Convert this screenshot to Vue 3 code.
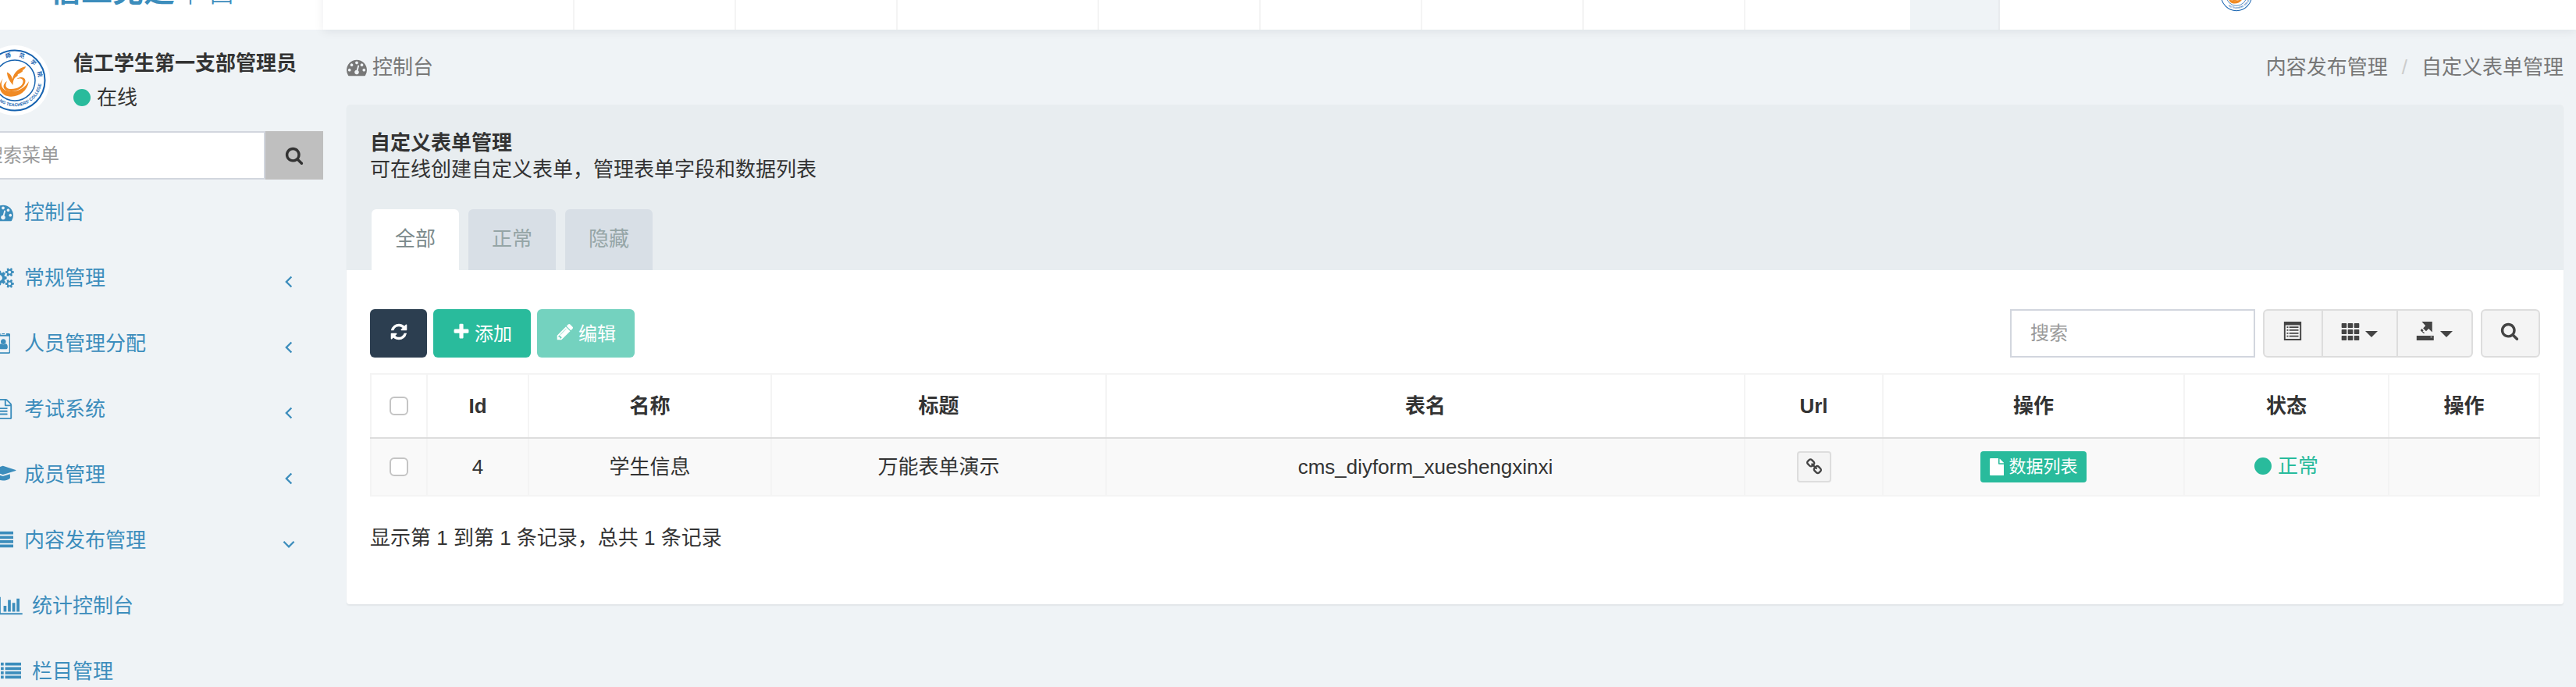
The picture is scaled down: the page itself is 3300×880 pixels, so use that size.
<script setup>
import { h, ref } from 'vue';

// 图标路径，viewBox 高度统一 1792，宽度按字形
const glyphs = {
  dashboard: [1792, 'M384 1152q0-53-37.5-90.5t-90.5-37.5-90.5 37.5-37.5 90.5 37.5 90.5 90.5 37.5 90.5-37.5 37.5-90.5zm192-448q0-53-37.5-90.5t-90.5-37.5-90.5 37.5-37.5 90.5 37.5 90.5 90.5 37.5 90.5-37.5 37.5-90.5zm428 481l101-382q6-26-7.5-48.5t-38.5-29.5-48 6.5-30 39.5l-101 382q-60 5-107 43.5t-63 98.5q-20 77 20 146t117 89 146-20 89-117q16-60-6-117t-72-91zm660-33q0-53-37.5-90.5t-90.5-37.5-90.5 37.5-37.5 90.5 37.5 90.5 90.5 37.5 90.5-37.5 37.5-90.5zm-640-640q0-53-37.5-90.5t-90.5-37.5-90.5 37.5-37.5 90.5 37.5 90.5 90.5 37.5 90.5-37.5 37.5-90.5zm448 192q0-53-37.5-90.5t-90.5-37.5-90.5 37.5-37.5 90.5 37.5 90.5 90.5 37.5 90.5-37.5 37.5-90.5zm320 448q0 261-141 483-19 29-54 29h-1402q-35 0-54-29-141-221-141-483 0-182 71-348t191-286 286-191 348-71 348 71 286 191 191 286 71 348z'],
  cogs: [1920, 'M896 896q0-106-75-181t-181-75-181 75-75 181 75 181 181 75 181-75 75-181zm768 512q0-52-38-90t-90-38-90 38-38 90q0 53 37.5 90.5t90.5 37.5 90.5-37.5 37.5-90.5zm0-1024q0-52-38-90t-90-38-90 38-38 90q0 53 37.5 90.5t90.5 37.5 90.5-37.5 37.5-90.5zm-384 421v185q0 10-7 19.5t-16 10.5l-155 24q-11 35-32 76 34 48 90 115 7 11 7 20 0 12-7 19-23 30-82.5 89.5t-78.5 59.5q-11 0-21-7l-115-90q-37 19-77 31-11 108-23 155-7 24-30 24h-186q-11 0-20-7.5t-10-17.5l-23-153q-34-10-75-31l-118 89q-7 7-20 7-11 0-21-8-144-133-144-160 0-9 7-19 10-14 41-53t47-61q-23-44-35-82l-152-24q-10-1-17-9.5t-7-19.5v-185q0-10 7-19.5t16-10.5l155-24q11-35 32-76-34-48-90-115-7-11-7-20 0-12 7-20 22-30 82-89t79-59q11 0 21 7l115 90q34-18 77-32 11-108 23-154 7-24 30-24h186q11 0 20 7.5t10 17.5l23 153q34 10 75 31l118-89q8-7 20-7 11 0 21 8 144 133 144 160 0 8-7 19-12 16-42 54t-45 60q23 48 34 82l152 23q10 2 17 10.5t7 19.5zm640 533v140q0 16-149 31-12 27-30 52 51 113 51 138 0 4-4 7-122 71-124 71-8 0-46-47t-52-68q-20 2-30 2t-30-2q-14 21-52 68t-46 47q-2 0-124-71-4-3-4-7 0-25 51-138-18-25-30-52-149-15-149-31v-140q0-16 149-31 13-29 30-52-51-113-51-138 0-4 4-7 4-2 35-20t59-34 30-16q8 0 46 46.5t52 67.5q20-2 30-2t30 2q51-71 92-112l6-2q4 0 124 70 4 3 4 7 0 25-51 138 17 23 30 52 149 15 149 31zm0-1024v140q0 16-149 31-12 27-30 52 51 113 51 138 0 4-4 7-122 71-124 71-8 0-46-47t-52-68q-20 2-30 2t-30-2q-14 21-52 68t-46 47q-2 0-124-71-4-3-4-7 0-25 51-138-18-25-30-52-149-15-149-31v-140q0-16 149-31 13-29 30-52-51-113-51-138 0-4 4-7 4-2 35-20t59-34 30-16q8 0 46 46.5t52 67.5q20-2 30-2t30 2q51-71 92-112l6-2q4 0 124 70 4 3 4 7 0 25-51 138 17 23 30 52 149 15 149 31z'],
  badge: [1280, 'M1024 1228q0 80-49 126t-118 46h-434q-69 0-118-46t-49-126q0-128 49-222t151-94q80 76 184 76t184-76q102 0 151 94t49 222zM870 736q0 95-67 162t-163 67-163-67-67-162 67-162 163-67 163 67 67 162zM1152 1632v-1376h-1024v1376q0 32 32 32h960q32 0 32-32zM1280 160v1472q0 66-47 113t-113 47h-960q-66 0-113-47t-47-113v-1472q0-66 47-113t113-47h224v96q0 32 32 32h448q32 0 32-32v-96h224q66 0 113 47t47 113zM512 0h256v64h-256z'],
  fileText: [1792, 'M1596 380q28 28 48 76t20 88v1152q0 40-28 68t-68 28h-1344q-40 0-68-28t-28-68v-1600q0-40 28-68t68-28h896q40 0 88 20t76 48zm-444-244v376h376q-10-29-22-41l-313-313q-12-12-41-22zm384 1528v-1024h-416q-40 0-68-28t-28-68v-416h-768v1536h1280zm-1024-864q0-14 9-23t23-9h704q14 0 23 9t9 23v64q0 14-9 23t-23 9h-704q-14 0-23-9t-9-23v-64zm736 224q14 0 23 9t9 23v64q0 14-9 23t-23 9h-704q-14 0-23-9t-9-23v-64q0-14 9-23t23-9h704zm0 256q14 0 23 9t9 23v64q0 14-9 23t-23 9h-704q-14 0-23-9t-9-23v-64q0-14 9-23t23-9h704z'],
  cap: [2304, 'M1774 836l18 316q4 69-82 128t-235 93.5-323 34.5-323-34.5-235-93.5-82-128l18-316 574 181q22 7 48 7t48-7zm530-324q0 23-22 31l-1120 352q-4 1-10 1t-10-1l-652-206q-43 34-71 111.5t-34 178.5q63 36 63 109 0 69-58 107l58 433q2 14-8 25-9 11-24 11h-192q-15 0-24-11-10-11-8-25l58-433q-58-38-58-107 0-73 65-111 11-207 98-330l-333-104q-22-8-22-31t22-31l1120-352q4-1 10-1t10 1l1120 352q22 8 22 31z'],
  list: [1792, 'M0 1280h256v256h-256zM0 896h256v256h-256zM0 512h256v256h-256zM0 128h256v256h-256zM384 1280h1408v256h-1408zM384 896h1408v256h-1408zM384 512h1408v256h-1408zM384 128h1408v256h-1408z'],
  chart: [2048, 'M640 896v512h-256v-512h256zm384-512v1024h-256v-1024h256zm1024 1152v128h-2048v-1536h128v1408h1920zm-640-896v768h-256v-768h256zm384-384v1152h-256v-1152h256z'],
  search: [1792, 'M1216 832q0-185-131.5-316.5t-316.5-131.5-316.5 131.5-131.5 316.5 131.5 316.5 316.5 131.5 316.5-131.5 131.5-316.5zm512 832q0 52-38 90t-90 38q-54 0-90-38l-343-342q-179 124-399 124-143 0-273.5-55.5t-225-150-150-225-55.5-273.5 55.5-273.5 150-225 225-150 273.5-55.5 273.5 55.5 225 150 150 225 55.5 273.5q0 220-124 399l343 343q37 37 37 90z'],
  refresh: [1792, 'M1639 1056q0 5-1 7-64 268-268 434.5t-478 166.5q-146 0-282.5-55t-243.5-157l-129 129q-19 19-45 19t-45-19-19-45v-448q0-26 19-45t45-19h448q26 0 45 19t19 45-19 45l-137 137q71 66 161 102t187 36q134 0 250-65t186-179q11-17 53-117 8-23 30-23h192q13 0 22.5 9.5t9.5 22.5zm25-800v448q0 26-19 45t-45 19h-448q-26 0-45-19t-19-45 19-45l138-138q-148-137-349-137-134 0-250 65t-186 179q-11 17-53 117-8 23-30 23h-199q-13 0-22.5-9.5t-9.5-22.5v-7q65-268 270-434.5t480-166.5q146 0 284 55.5t245 156.5l130-129q19-19 45-19t45 19 19 45z'],
  plus: [1792, 'M1600 736v192q0 40-28 68t-68 28h-416v416q0 40-28 68t-68 28h-192q-40 0-68-28t-28-68v-416h-416q-40 0-68-28t-28-68v-192q0-40 28-68t68-28h416v-416q0-40 28-68t68-28h192q40 0 68 28t28 68v416h416q40 0 68 28t28 68z'],
  pencil: [1792, 'M491 1536l91-91-235-235-91 91v107h128v128h107zm523-928q0-22-22-22-10 0-17 7l-542 542q-7 7-7 17 0 22 22 22 10 0 17-7l542-542q7-7 7-17zm-54-192l416 416-832 832h-416v-416zm683 96q0 53-37 90l-166 166-416-416 166-165q36-38 90-38 53 0 91 38l235 234q37 39 37 91z'],
  link: [1792, 'M1520 1216q0-40-28-68l-208-208q-28-28-68-28-42 0-72 32 3 3 19 18.5t21.5 21.5 15 19 13 25.5 3.5 27.5q0 40-28 68t-68 28q-15 0-27.5-3.5t-25.5-13-19-15-21.5-21.5-18.5-19q-33 31-33 73 0 40 28 68l206 207q27 27 68 27 40 0 68-26l147-146q28-28 28-67zm-703-705q0-40-28-68l-206-207q-28-28-68-28-39 0-68 27l-147 146q-28 28-28 67 0 40 28 68l208 208q27 27 68 27 42 0 72-31-3-3-19-18.5t-21.5-21.5-15-19-13-25.5-3.5-27.5q0-40 28-68t68-28q15 0 27.5 3.5t25.5 13 19 15 21.5 21.5 18.5 19q33-31 33-73zm895 705q0 120-85 203l-147 146q-83 83-203 83-121 0-204-85l-206-207q-83-83-83-203 0-123 88-209l-88-88q-86 88-208 88-120 0-204-84l-208-208q-84-84-84-204t85-203l147-146q83-83 203-83 121 0 204 85l206 207q83 83 83 203 0 123-88 209l88 88q86-88 208-88 120 0 204 84l208 208q84 84 84 204z'],
  file: [1536, 'M1024 512v-472q22 14 36 28l408 408q14 14 28 36h-472zm-128 32q0 40 28 68t68 28h544v1056q0 40-28 68t-68 28h-1344q-40 0-68-28t-28-68v-1600q0-40 28-68t68-28h800v544z'],
  left: [1024, 'M800 500L404 896l396 396-112 112-508-508 508-508z'],
  down: [1152, 'M180 620l396 396 396-396 112 112-508 508-508-508z'],
  listAlt: [1792, 'M64 0h1664v1792h-1664zM208 336v1312h1376v-1312zM336 464h144v128h-144zM576 464h880v128h-880zM336 752h144v128h-144zM576 752h880v128h-880zM336 1040h144v128h-144zM576 1040h880v128h-880zM336 1328h144v128h-144zM576 1328h880v128h-880z'],
  th: [1792, 'M110 150h370q60 0 60 60v330q0 60-60 60h-370q-60 0-60-60v-330q0-60 60-60zM710 150h370q60 0 60 60v330q0 60-60 60h-370q-60 0-60-60v-330q0-60 60-60zM1310 150h370q60 0 60 60v330q0 60-60 60h-370q-60 0-60-60v-330q0-60 60-60zM110 750h370q60 0 60 60v330q0 60-60 60h-370q-60 0-60-60v-330q0-60 60-60zM710 750h370q60 0 60 60v330q0 60-60 60h-370q-60 0-60-60v-330q0-60 60-60zM1310 750h370q60 0 60 60v330q0 60-60 60h-370q-60 0-60-60v-330q0-60 60-60zM110 1342h370q60 0 60 60v330q0 60-60 60h-370q-60 0-60-60v-330q0-60 60-60zM710 1342h370q60 0 60 60v330q0 60-60 60h-370q-60 0-60-60v-330q0-60 60-60zM1310 1342h370q60 0 60 60v330q0 60-60 60h-370q-60 0-60-60v-330q0-60 60-60z'],
  exportFile: [1792, 'M560 0h990v1010l-340-330-240 240-290-290 230-230zM560 680l160 160-90 90 200 130-80 80-290-260q-50-50 0-100zM60 1350h1640v442h-1640zM1390 1440v80h150v-80z'],
};

const Icon = (props) =>
  h(
    'svg',
    {
      viewBox: `0 0 ${glyphs[props.name][0]} 1792`,
      fill: 'currentColor',
      'fill-rule': 'evenodd',
      'aria-hidden': 'true',
    },
    [h('path', { d: glyphs[props.name][1] })],
  );
Icon.props = ['name'];

// 左侧菜单
const menus = [
  { icon: 'dashboard', text: '控制台' },
  { icon: 'cogs', text: '常规管理', arrow: 'left' },
  { icon: 'badge', text: '人员管理分配', arrow: 'left' },
  { icon: 'fileText', text: '考试系统', arrow: 'left' },
  { icon: 'cap', text: '成员管理', arrow: 'left' },
  { icon: 'list', text: '内容发布管理', arrow: 'down' },
  { icon: 'chart', text: '统计控制台', sub: true },
  { icon: 'list', text: '栏目管理', sub: true },
];

// 顶部标签页宽度类型
const navTabs = ['first', 'short', 'short', 'long', 'short', 'short', 'short', 'short', 'last', 'active'];

// 状态筛选
const tabs = ['全部', '正常', '隐藏'];
const activeTab = ref('全部');

const columns = [
  { key: 'id', title: 'Id' },
  { key: 'name', title: '名称' },
  { key: 'title', title: '标题' },
  { key: 'table', title: '表名' },
  { key: 'url', title: 'Url' },
  { key: 'data', title: '操作' },
  { key: 'status', title: '状态' },
  { key: 'operate', title: '操作' },
];

const rows = [
  { id: 4, name: '学生信息', title: '万能表单演示', table: 'cms_diyform_xueshengxinxi', status: '正常' },
];
</script>

<template>
  <div class="app">
    <!-- 校徽 -->
    <svg class="defs" aria-hidden="true">
      <symbol id="emblem" viewBox="0 0 180 180">
        <circle cx="90" cy="90" r="90" fill="#fff" />
        <circle cx="90" cy="90" r="77" fill="none" stroke="#1763b0" stroke-width="4" />
        <circle cx="90" cy="90" r="52" fill="none" stroke="#1763b0" stroke-width="3" />
        <g class="emblem-cn">
          <text x="90" y="29" transform="rotate(-46 90 90)">阳</text>
          <text x="90" y="29" transform="rotate(-15 90 90)">師</text>
          <text x="90" y="29" transform="rotate(16 90 90)">范</text>
          <text x="90" y="29" transform="rotate(46 90 90)">学</text>
          <text x="90" y="29" transform="rotate(76 90 90)">院</text>
        </g>
        <path id="emblem-arc" d="M21 90A69 69 0 0 0 158 99" fill="none" />
        <text class="emblem-en">
          <textPath href="#emblem-arc" startOffset="100%">NG TEACHERS' COLLEGE</textPath>
        </text>
        <g fill="#f08a24">
          <path d="M85 102C77 92 70 82 70 69c8 3 12 10 14 18 3-18 16-28 34-33-1 5-4 8-9 10 2 0 2 3-2 5-4 3-7 4-10 6 2 1 0 4-4 6-6 4-8 11-8 21z" />
          <path d="M60 85c-8 13-5 27 9 31 21 6 44-2 57-24-4 27-28 42-51 39-23-3-32-28-15-46z" />
          <path d="M70 92c-6 11-3 19 8 20 18 1 32-8 33-18 1-8-6-11-16-8 13-9 26-2 21 11-5 14-26 24-43 20-15-3-16-17-3-25z" />
        </g>
      </symbol>
    </svg>

    <header class="header">
      <a href="#" class="logo"><b>信工党建</b>平台</a>
      <nav class="navbar">
        <a v-for="(type, i) in navTabs" :key="i" href="#" class="nav-tab" :class="`nav-tab--${type}`" aria-label="标签页"></a>
        <a href="#" class="nav-user" aria-label="个人中心"><svg class="nav-avatar"><use href="#emblem" /></svg></a>
      </nav>
    </header>

    <div class="body">
      <aside class="sidebar">
        <div class="user-panel">
          <svg class="avatar"><use href="#emblem" /></svg>
          <div class="user-info">
            <strong>信工学生第一支部管理员</strong>
            <span class="online"><i class="dot"></i>在线</span>
          </div>
        </div>
        <form class="menu-search" @submit.prevent>
          <input type="text" placeholder="搜索菜单" aria-label="搜索菜单" />
          <button type="submit" aria-label="搜索"><Icon name="search" class="icon-24" /></button>
        </form>
        <nav class="menu">
          <a v-for="item in menus" :key="item.text" href="#" class="menu-item" :class="{ 'menu-item--sub': item.sub }">
            <span class="menu-icon"><Icon :name="item.icon" class="icon-26" /></span>
            <span class="menu-text">{{ item.text }}</span>
            <Icon v-if="item.arrow" :name="item.arrow" class="menu-arrow" />
          </a>
        </nav>
      </aside>

      <main class="main">
        <div class="ribbon">
          <a href="#" class="crumb"><Icon name="dashboard" class="icon-26" />控制台</a>
          <div class="crumbs">
            <a href="#" class="crumb">内容发布管理</a>
            <span class="slash">/</span>
            <a href="#" class="crumb">自定义表单管理</a>
          </div>
        </div>

        <section class="panel">
          <div class="panel-heading">
            <div class="panel-lead">
              <strong>自定义表单管理</strong>
              <span>可在线创建自定义表单，管理表单字段和数据列表</span>
            </div>
            <div class="tabs" role="tablist">
              <button
                v-for="tab in tabs"
                :key="tab"
                type="button"
                role="tab"
                class="tab"
                :class="{ 'tab--active': tab === activeTab }"
                @click="activeTab = tab"
              >
                {{ tab }}
              </button>
            </div>
          </div>

          <div class="panel-body">
            <div class="toolbar">
              <button type="button" class="btn btn--dark" aria-label="刷新"><Icon name="refresh" class="icon-24" /></button>
              <button type="button" class="btn btn--green"><Icon name="plus" class="icon-24" />添加</button>
              <button type="button" class="btn btn--green btn--disabled"><Icon name="pencil" class="icon-24" />编辑</button>
              <input type="text" class="search-input" placeholder="搜索" aria-label="搜索" />
              <div class="btn-group">
                <button type="button" class="btn-tool" aria-label="切换"><Icon name="listAlt" class="icon-24" /></button>
                <button type="button" class="btn-tool btn-tool--wide" aria-label="列"><Icon name="th" class="icon-24" /><i class="caret"></i></button>
                <button type="button" class="btn-tool btn-tool--wide" aria-label="导出数据"><Icon name="exportFile" class="icon-24" /><i class="caret"></i></button>
              </div>
              <button type="button" class="btn-tool btn-tool--single" aria-label="普通搜索"><Icon name="search" class="icon-24" /></button>
            </div>

            <table class="table">
              <colgroup>
                <col class="col-check" />
                <col v-for="col in columns" :key="col.key" :class="`col-${col.key}`" />
              </colgroup>
              <thead>
                <tr>
                  <th><input type="checkbox" class="check" aria-label="全选" /></th>
                  <th v-for="col in columns" :key="col.key">{{ col.title }}</th>
                </tr>
              </thead>
              <tbody>
                <tr v-for="row in rows" :key="row.id">
                  <td><input type="checkbox" class="check" :aria-label="row.name" /></td>
                  <td>{{ row.id }}</td>
                  <td>{{ row.name }}</td>
                  <td>{{ row.title }}</td>
                  <td>{{ row.table }}</td>
                  <td>
                    <a href="#" class="btn-xs btn-xs--link" aria-label="链接"><Icon name="link" class="icon-22" /></a>
                  </td>
                  <td>
                    <a href="#" class="btn-xs btn-xs--green"><Icon name="file" class="icon-22" />数据列表</a>
                  </td>
                  <td>
                    <span class="status"><i class="dot"></i>{{ row.status }}</span>
                  </td>
                  <td></td>
                </tr>
              </tbody>
            </table>

            <div class="pagination-info">显示第 1 到第 1 条记录，总共 1 条记录</div>
          </div>
        </section>
      </main>
    </div>
  </div>
</template>

<style>
body {
  background-color: #eff3f6;
}
</style>

<style scoped>
.app {
  height: 100vh;
  overflow: hidden;
  font-family: 'Liberation Sans', 'Noto Sans CJK SC', sans-serif;
  font-size: 26px;
  line-height: 36px;
  color: #333333;
  background-color: #eff3f6;
}

.app * {
  box-sizing: border-box;
}

a {
  color: inherit;
  text-decoration: none;
}

button,
input {
  font-family: inherit;
  margin: 0;
}

button {
  cursor: pointer;
}

.defs {
  position: absolute;
  width: 0;
  height: 0;
}

.emblem-cn {
  font-size: 14px;
  font-weight: 700;
  fill: #1763b0;
  text-anchor: middle;
}

.emblem-en {
  font-size: 11px;
  font-weight: 700;
  fill: #1763b0;
  text-anchor: end;
}

.icon-22 {
  height: 22px;
}

.icon-24 {
  height: 24px;
}

.icon-26 {
  height: 26px;
}

/* 顶栏：向上滚出一部分 */
.header {
  display: flex;
  height: 100px;
  margin-top: -62px;
  margin-left: -46px;
}

.logo {
  flex: none;
  width: 460px;
  line-height: 100px;
  font-size: 40px;
  font-weight: 300;
  text-align: center;
  color: #3c8dbc;
  background-color: #ffffff;
}

.logo b {
  font-weight: 700;
}

.navbar {
  flex: 1;
  display: flex;
  background-color: #ffffff;
  box-shadow: 0 2px 12px rgba(0, 21, 41, 0.08);
}

.nav-tab {
  width: 207px;
  border-right: 2px solid #f4f4f4;
}

.nav-tab--first {
  width: 322px;
}

.nav-tab--long {
  width: 258px;
}

.nav-tab--last {
  width: 211px;
  border-right: none;
}

.nav-tab--active {
  width: 115px;
  border-right-color: #e8ebee;
  background-color: #eff3f6;
}

.nav-user {
  display: flex;
  align-items: center;
  margin-left: auto;
  padding: 12px 412px 0 0;
}

.nav-avatar {
  width: 46px;
  height: 46px;
}

.body {
  display: flex;
}

/* 侧边栏 */
.sidebar {
  flex: none;
  width: 460px;
  margin-left: -46px;
}

.user-panel {
  display: flex;
  gap: 30px;
  padding: 20px;
}

.avatar {
  flex: none;
  width: 90px;
  height: 90px;
}

.user-info {
  display: flex;
  flex-direction: column;
  gap: 8px;
  padding-top: 5px;
}

.dot {
  width: 22px;
  height: 22px;
  border-radius: 50%;
  background-color: #29bb9c;
}

.online,
.status {
  display: inline-flex;
  align-items: center;
  gap: 8px;
}

.status {
  color: #29bb9c;
}

.menu-search {
  display: flex;
  height: 62px;
}

.menu-search input {
  flex: 1;
  min-width: 0;
  padding: 0 24px;
  font-size: 24px;
  border: 2px solid #d2d6de;
  background-color: #ffffff;
}

.menu-search button {
  display: flex;
  align-items: center;
  justify-content: center;
  width: 74px;
  padding: 0;
  border: none;
  color: #333333;
  background-color: #bfbfbf;
}

input::placeholder {
  color: #999999;
  opacity: 1;
}

.menu-item {
  display: flex;
  align-items: center;
  height: 84px;
  padding: 0 30px;
  color: #3c8dbc;
}

.menu-item--sub {
  padding-left: 40px;
}

.menu-icon {
  display: flex;
  justify-content: center;
  width: 40px;
  margin-right: 7px;
}

.menu-arrow {
  width: 24px;
  height: 26px;
  margin: 10px 2px 0 auto;
}

/* 主区 */
.main {
  flex: 1;
  min-width: 0;
  padding: 0 16px 0 30px;
}

.ribbon {
  display: flex;
  justify-content: space-between;
  align-items: center;
  height: 96px;
  color: #777777;
}

.crumb {
  display: inline-flex;
  align-items: center;
  gap: 7px;
}

.slash {
  padding: 0 18px;
  color: #cccccc;
}

.panel {
  border-radius: 4px;
  background-color: #ffffff;
  box-shadow: 0 2px 2px rgba(0, 0, 0, 0.06);
}

.panel-heading {
  padding: 32px 30px 0;
  border-radius: 4px 4px 0 0;
  background-color: #e8edf0;
}

.panel-lead {
  display: flex;
  flex-direction: column;
  line-height: 34px;
  margin-bottom: 34px;
}

.tabs {
  display: flex;
  gap: 12px;
  padding-left: 2px;
}

.tab {
  width: 112px;
  height: 78px;
  padding: 0 0 8px;
  border: none;
  border-radius: 6px 6px 0 0;
  font-size: 26px;
  color: #95a5a6;
  background-color: #d8dfe6;
}

.tab--active {
  color: #7b8a8b;
  background-color: #ffffff;
}

.panel-body {
  padding: 50px 30px 67px;
}

.toolbar {
  display: flex;
  gap: 8px;
  margin-bottom: 20px;
}

.btn {
  display: flex;
  align-items: center;
  justify-content: center;
  gap: 5px;
  height: 62px;
  padding: 0 24px 4px;
  border: none;
  border-radius: 6px;
  font-size: 24px;
  color: #ffffff;
}

.btn--dark {
  width: 73px;
  background-color: #2c3e50;
}

.btn--green {
  background-color: #29bb9c;
}

.btn--disabled {
  background-color: #74d2bf;
}

.search-input {
  width: 314px;
  height: 62px;
  margin-left: auto;
  padding: 0 24px;
  border: 2px solid #d2d6de;
  font-size: 24px;
}

.btn-group {
  display: flex;
  margin: 0 2px;
}

.btn-tool {
  display: flex;
  align-items: center;
  justify-content: center;
  gap: 7px;
  width: 77px;
  height: 62px;
  padding: 0 2px 6px 0;
  border: 2px solid #dddddd;
  color: #444444;
  background-color: #f4f4f4;
}

.btn-group .btn-tool:first-child {
  border-radius: 6px 0 0 6px;
}

.btn-group .btn-tool:last-child {
  border-radius: 0 6px 6px 0;
}

.btn-tool--wide {
  width: 98px;
  margin-left: -2px;
}

.btn-tool--single {
  width: 76px;
  border-radius: 6px;
}

.caret {
  margin-top: 8px;
  border-top: 8px solid #444444;
  border-left: 8px solid transparent;
  border-right: 8px solid transparent;
}

/* 表格 */
.table {
  width: 100%;
  table-layout: fixed;
  border-collapse: collapse;
  text-align: center;
}

.col-check { width: 72px; }
.col-id { width: 130px; }
.col-name { width: 311px; }
.col-title { width: 429px; }
.col-table { width: 818px; }
.col-url { width: 177px; }
.col-data { width: 386px; }
.col-status { width: 262px; }
.col-operate { width: 193px; }

.table th,
.table td {
  padding: 0;
  border: 2px solid #f4f4f4;
  vertical-align: middle;
}

.table th {
  height: 82px;
  font-weight: 700;
  border-bottom-color: #dddddd;
}

.table td {
  height: 74px;
  border-top-color: #dddddd;
  background-color: #f9f9f9;
}

.check {
  display: block;
  appearance: none;
  width: 24px;
  height: 24px;
  margin: 0 auto;
  border: 2px solid #c4c4c4;
  border-radius: 6px;
  background-color: #ffffff;
}

.check:checked {
  background-color: #29bb9c;
}

.btn-xs {
  display: inline-flex;
  align-items: center;
  justify-content: center;
  gap: 6px;
  height: 40px;
  border-radius: 4px;
  font-size: 22px;
  vertical-align: middle;
}

.btn-xs--link {
  width: 44px;
  border: 2px solid #dddddd;
  color: #444444;
  background-color: #f4f4f4;
}

.btn-xs--green {
  padding: 0 12px;
  color: #ffffff;
  background-color: #29bb9c;
}

.pagination-info {
  margin-top: 35px;
}
</style>
